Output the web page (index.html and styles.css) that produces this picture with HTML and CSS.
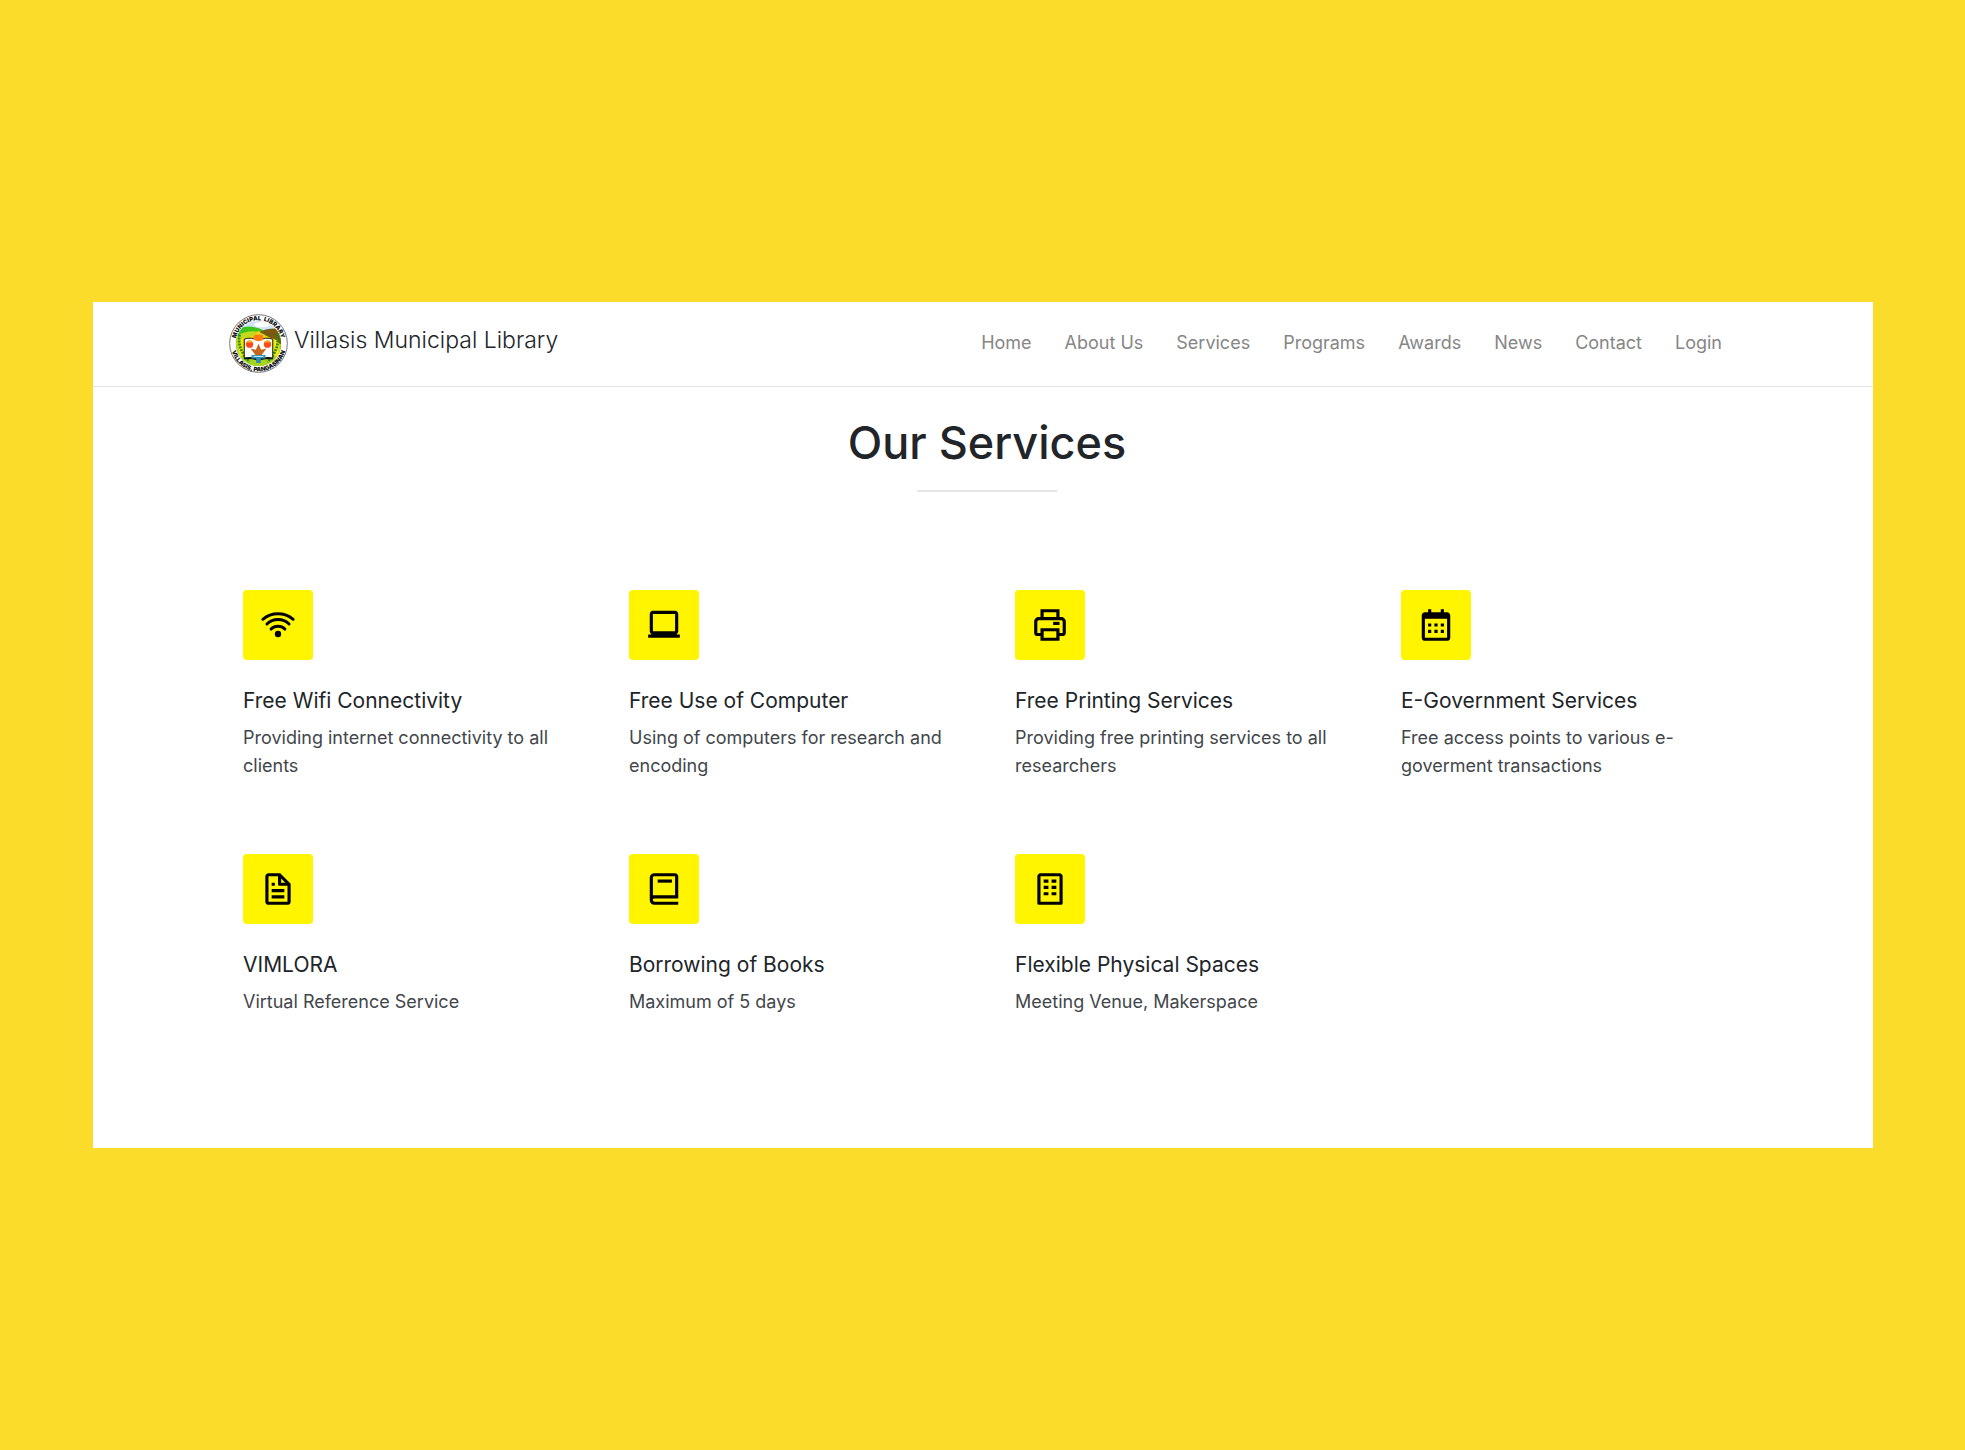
FILE: index.html
```html
<!DOCTYPE html>
<html lang="en">
<head>
<meta charset="utf-8">
<meta name="viewport" content="width=device-width, initial-scale=1">
<title>Villasis Municipal Library</title>
<link rel="stylesheet" href="styles.css">
</head>
<body>
<div class="page">
  <header class="header">
    <a class="brand" href="#">
      <svg class="brand-logo" viewBox="0 0 178 178" aria-hidden="true">
        <defs>
          <clipPath id="seal"><circle cx="89" cy="89" r="68"/></clipPath>
          <path id="arc-top" d="M19 89a70 70 0 0 1 140 0"/>
          <path id="arc-bottom" d="M5 89a84 84 0 0 0 168 0"/>
        </defs>
        <circle cx="89" cy="89" r="87" fill="#fff" stroke="#777" stroke-width="3"/>
        <g clip-path="url(#seal)">
          <rect width="178" height="178" fill="#cfe6fa"/>
          <ellipse cx="100" cy="32" rx="24" ry="8" fill="#fff"/>
          <path d="M0 60q50-40 110-8l68 0v126H0z" fill="#3fc41c"/>
          <path d="M90 56q30-20 88-8v60H90z" fill="#7a5a12"/>
          <path d="M20 66q50-24 84-6l60 36v82H10z" fill="#c5d81c"/>
          <path d="M30 78q60-26 120 4v70H30z" fill="#f5e60a"/>
          <path d="M18 130q70-16 142 0v48H18z" fill="#a8d51c"/>
        </g>
        <path d="M32 62q-8 44 30 82M146 62q8 44-30 82" fill="none" stroke="#1c8a1c" stroke-width="8" stroke-dasharray="6 3"/>
        <path d="M46 76q22-8 43 4 21-12 43-4v58q-22-4-43 4-21-8-43-4z" fill="#fff" stroke="#111" stroke-width="3"/>
        <path d="M46 134q22-4 43 4 21-8 43-4" fill="none" stroke="#111" stroke-width="6"/>
        <path d="M89 90l8 18 16-4-18 24H83l-18-24 16 4z" fill="#c9651c"/>
        <path d="M74 68q15-18 30 0v10q-15 8-30 0z" fill="#ff7a14"/>
        <path d="M80 62l9-12 9 12z" fill="#ffd21c"/>
        <circle cx="62" cy="91" r="11" fill="#ff4a1c"/>
        <circle cx="116" cy="91" r="11" fill="#ff4a1c"/>
        <path d="M52 86a11 11 0 0 1 20 0zM106 86a11 11 0 0 1 20 0z" fill="#ffb31c"/>
        <path d="M68 124h42v10H96v14H82v-14H68z" fill="#2a8fb8"/>
        <path d="M74 128h30" stroke="#d5f0fa" stroke-width="3"/>
        <text class="seal-text"><textPath href="#arc-top" startOffset="50%" text-anchor="middle">MUNICIPAL &#160;LIBRARY</textPath></text>
        <text class="seal-text"><textPath href="#arc-bottom" startOffset="50%" text-anchor="middle">VILLASIS, PANGASINAN</textPath></text>
      </svg>
      <span class="brand-name">Villasis Municipal Library</span>
    </a>
    <nav class="nav" aria-label="Main">
      <a href="#">Home</a>
      <a href="#">About Us</a>
      <a href="#">Services</a>
      <a href="#">Programs</a>
      <a href="#">Awards</a>
      <a href="#">News</a>
      <a href="#">Contact</a>
      <a href="#">Login</a>
    </nav>
  </header>

  <main class="services">
    <h1 class="services-title">Our Services</h1>
    <div class="services-grid">
      <article class="service">
        <div class="service-icon"><svg viewBox="0 0 24 24" aria-hidden="true"><path class="stroke" d="M2.4 8.4a14.9 14.9 0 0 1 19.2 0M5 11.4a9.9 9.9 0 0 1 14 0M7.6 14.6a6.3 6.3 0 0 1 8.8 0"/><circle cx="12" cy="17.7" r="2"/></svg></div>
        <h2>Free Wifi Connectivity</h2>
        <p>Providing internet connectivity to all clients</p>
      </article>
      <article class="service">
        <div class="service-icon"><svg viewBox="0 0 24 24" aria-hidden="true"><path d="M20 17.722c.595-.347 1-.985 1-1.722V5c0-1.103-.897-2-2-2H5c-1.103 0-2 .897-2 2v11c0 .736.405 1.375 1 1.722V18H2v2h20v-2h-2v-.278zM5 16V5h14l.002 11H5z"/></svg></div>
        <h2>Free Use of Computer</h2>
        <p>Using of computers for research and encoding</p>
      </article>
      <article class="service">
        <div class="service-icon"><svg viewBox="0 0 24 24" aria-hidden="true"><path d="M19 7h-1V2H6v5H5c-1.654 0-3 1.346-3 3v7c0 1.103.897 2 2 2h2v3h12v-3h2c1.103 0 2-.897 2-2v-7c0-1.654-1.346-3-3-3zM8 4h8v3H8V4zm8 16H8v-4h8v4zm4-3h-2v-3H6v3H4v-7c0-.551.449-1 1-1h14c.552 0 1 .449 1 1v7z"/><path d="M14 10h4v2h-4z"/></svg></div>
        <h2>Free Printing Services</h2>
        <p>Providing free printing services to all researchers</p>
      </article>
      <article class="service">
        <div class="service-icon"><svg viewBox="0 0 24 24" aria-hidden="true"><path d="M7 11h2v2H7zm0 4h2v2H7zm4-4h2v2h-2zm0 4h2v2h-2zm4-4h2v2h-2zm0 4h2v2h-2z"/><path d="M5 22h14c1.103 0 2-.897 2-2V6c0-1.103-.897-2-2-2h-2V2h-2v2H9V2H7v2H5c-1.103 0-2 .897-2 2v14c0 1.103.897 2 2 2zM19 8l.001 12H5V8h14z"/></svg></div>
        <h2>E-Government Services</h2>
        <p>Free access points to various e-goverment transactions</p>
      </article>
      <article class="service">
        <div class="service-icon"><svg viewBox="0 0 24 24" aria-hidden="true"><path d="M19.903 8.586a.997.997 0 0 0-.196-.293l-6-6a.997.997 0 0 0-.293-.196c-.03-.014-.062-.022-.094-.033a.991.991 0 0 0-.259-.051C13.04 2.011 13.021 2 13 2H6c-1.103 0-2 .897-2 2v16c0 1.103.897 2 2 2h12c1.103 0 2-.897 2-2V9c0-.021-.011-.04-.013-.062a.952.952 0 0 0-.051-.259c-.01-.032-.019-.063-.033-.093zM16.586 8H14V5.414L16.586 8zM6 20V4h6v5a1 1 0 0 0 1 1h5l.002 10H6z"/><path d="M8 12h8v2H8zm0 4h8v2H8zm0-8h2v2H8z"/></svg></div>
        <h2>VIMLORA</h2>
        <p>Virtual Reference Service</p>
      </article>
      <article class="service">
        <div class="service-icon"><svg viewBox="0 0 24 24" aria-hidden="true"><path d="M6 22h15v-2H6.012C5.55 19.988 5 19.805 5 19s.55-.988 1.012-1H21V4c0-1.103-.897-2-2-2H6c-1.206 0-3 .799-3 3v14c0 2.201 1.794 3 3 3zM5 8V5c0-.805.55-.988 1-1h13v12H5V8z"/><path d="M8 6h9v2H8z"/></svg></div>
        <h2>Borrowing of Books</h2>
        <p>Maximum of 5 days</p>
      </article>
      <article class="service">
        <div class="service-icon"><svg viewBox="0 0 24 24" aria-hidden="true"><path d="M18 2H6c-1.103 0-2 .897-2 2v17a1 1 0 0 0 1 1h14a1 1 0 0 0 1-1V4c0-1.103-.897-2-2-2zm0 18H6V4h12v16z"/><path d="M8 6h3v2H8zm5 0h3v2h-3zm-5 4h3v2H8zm5 0h3v2h-3zm-5 4h3v2H8zm5 0h3v2h-3z"/></svg></div>
        <h2>Flexible Physical Spaces</h2>
        <p>Meeting Venue, Makerspace</p>
      </article>
    </div>
  </main>
</div>
</body>
</html>
```
FILE: styles.css
```css
* {
  box-sizing: border-box;
}

body {
  display: flex;
  align-items: center;
  min-height: 100vh;
  margin: 0;
  padding: 0 92px 0 93px;
  background: #fbdc2b;
  color: #212529;
  font-family: Inter, "Liberation Sans", sans-serif;
  font-size: 18px;
  line-height: 28px;
}

.page {
  flex: 1;
  background: #fff;
}

.header {
  display: flex;
  flex-wrap: wrap;
  align-items: center;
  justify-content: space-between;
  min-height: 85px;
  padding: 0 151px 2px 136px;
  border-bottom: 1px solid #e6e6e6;
}

.brand {
  display: flex;
  align-items: center;
  gap: 6px;
  color: #212529;
  font-size: 23px;
  font-weight: 300;
  text-decoration: none;
}

.brand-logo {
  width: 59px;
  height: 59px;
}

.brand-name {
  padding-bottom: 6px;
}

.seal-text {
  fill: #111;
  font-size: 18px;
  font-weight: 900;
}

.nav {
  display: flex;
  flex-wrap: wrap;
  gap: 33px;
}

.nav a {
  color: #868686;
  text-decoration: none;
}

.services {
  padding: 26px 128px 132px 136px;
}

.services-title {
  margin: 0;
  font-size: 45px;
  font-weight: 500;
  line-height: 60px;
  text-align: center;
}

.services-title::after {
  display: block;
  width: 140px;
  height: 2px;
  margin: 17px auto 0;
  background: #e6e6e6;
  content: "";
}

.services-grid {
  display: grid;
  grid-template-columns: repeat(4, 1fr);
  gap: 74px 56px;
  padding: 98px 14px 0;
}

.service-icon {
  display: grid;
  place-items: center;
  width: 70px;
  height: 70px;
  margin-bottom: 28px;
  border-radius: 4px;
  background: #fff500;
}

.service-icon svg {
  width: 38px;
  height: 38px;
}

.stroke {
  fill: none;
  stroke: #000;
  stroke-width: 1.8;
  stroke-linecap: round;
}

.service h2 {
  margin: 0 0 10px;
  font-size: 21px;
  font-weight: 400;
  line-height: 26px;
}

.service p {
  margin: 0;
  color: #42464a;
}
```
